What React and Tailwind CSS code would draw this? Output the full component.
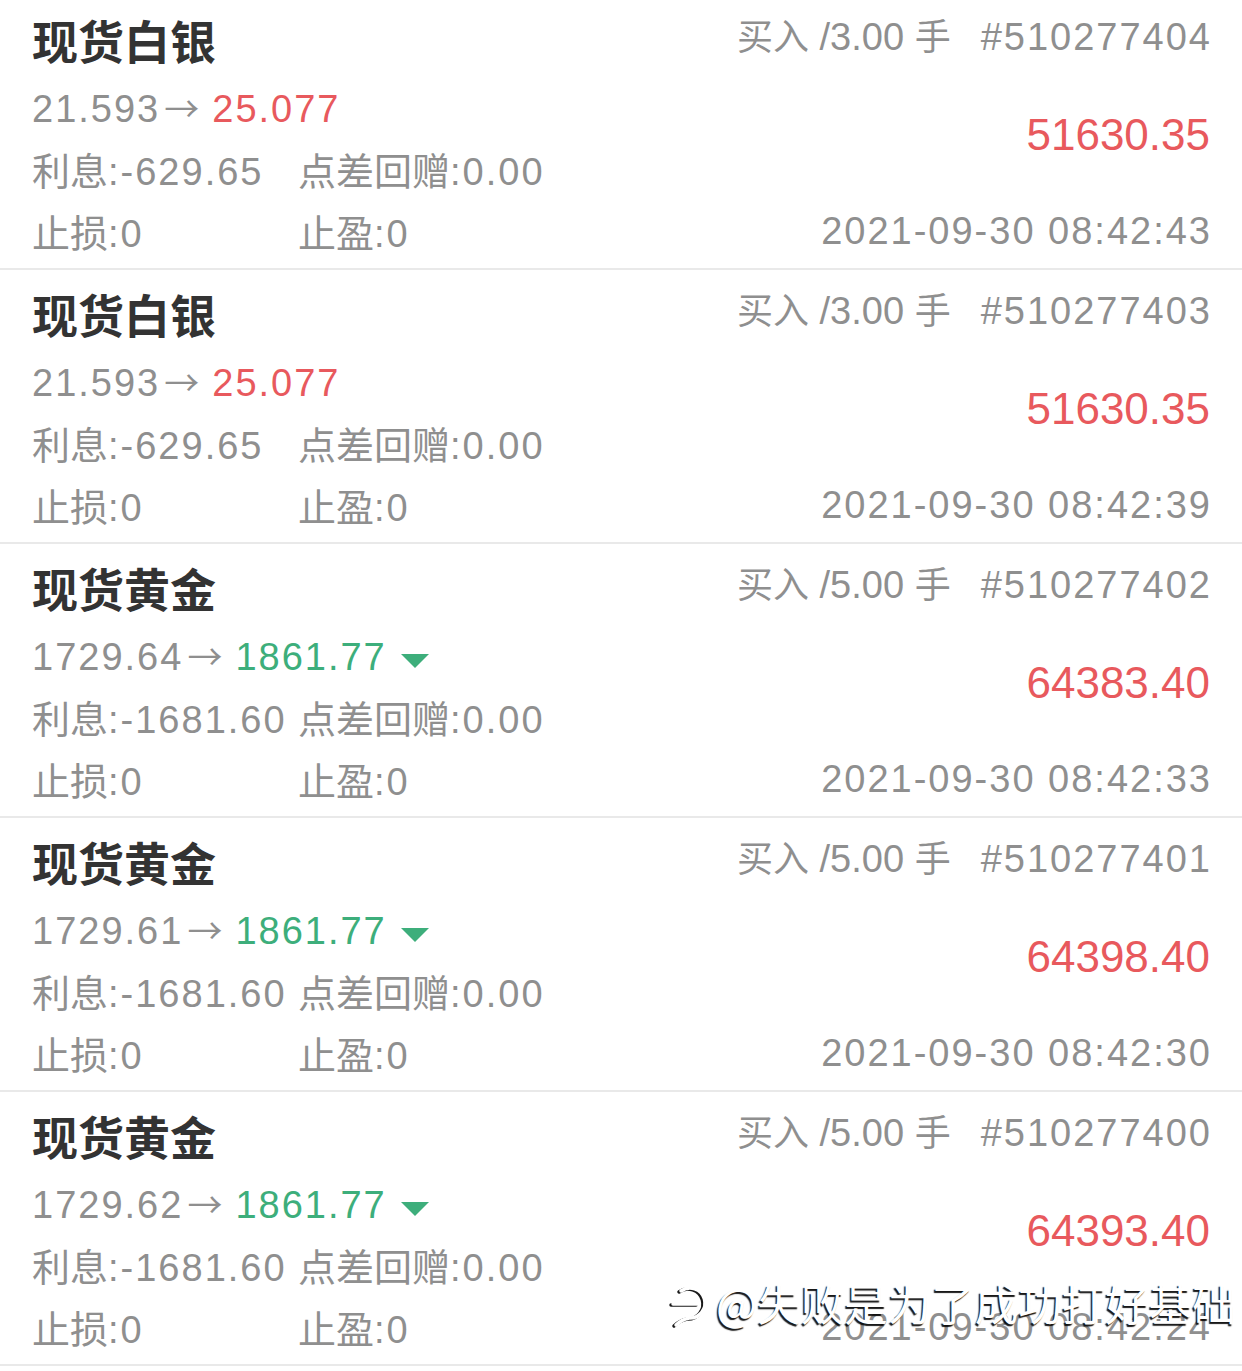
import React from "react";

const rows = [
  { name: "现货白银", lots: "3.00", id: "510277404", open: "21.593", cur: "25.077", up: true, interest: "-629.65", profit: "51630.35", time: "2021-09-30 08:42:43" },
  { name: "现货白银", lots: "3.00", id: "510277403", open: "21.593", cur: "25.077", up: true, interest: "-629.65", profit: "51630.35", time: "2021-09-30 08:42:39" },
  { name: "现货黄金", lots: "5.00", id: "510277402", open: "1729.64", cur: "1861.77", up: false, interest: "-1681.60", profit: "64383.40", time: "2021-09-30 08:42:33" },
  { name: "现货黄金", lots: "5.00", id: "510277401", open: "1729.61", cur: "1861.77", up: false, interest: "-1681.60", profit: "64398.40", time: "2021-09-30 08:42:30" },
  { name: "现货黄金", lots: "5.00", id: "510277400", open: "1729.62", cur: "1861.77", up: false, interest: "-1681.60", profit: "64393.40", time: "2021-09-30 08:42:24" },
];

const SPLIT = /([\u2E80-\u9FFF\uFF00-\uFFEF]+)/;
const IS_CJK = /^[\u2E80-\u9FFF\uFF00-\uFFEF]/;

const latG = "font-['Liberation_Sans',sans-serif] text-[38px] tracking-[2px]";
const cjkG = "font-['Noto_Sans_CJK_SC',sans-serif] text-[38px]";

function Mixed({ text }) {
  return text
    .split(SPLIT)
    .filter(Boolean)
    .map((p, i) =>
      IS_CJK.test(p) ? (
        <span key={i} className={cjkG}>{p}</span>
      ) : (
        <span key={i} className={latG}>{p}</span>
      )
    );
}

function Row({ r }) {
  return (
    <div className="h-[274px] border-b-2 border-[#e9e9e9] px-[32px] flex justify-between">
      <div className="flex flex-col">
        <div className="mt-[11px] h-[64px] leading-[64px] text-[46px] font-bold text-[#333333] font-['Noto_Sans_CJK_SC',sans-serif] whitespace-nowrap">
          {r.name}
        </div>
        <div className="mt-[5px] h-[62px] leading-[62px] whitespace-nowrap text-[#8f8f8f]">
          <span className={latG}>{r.open}</span>
          <span className="font-['Noto_Sans_CJK_SC',sans-serif] text-[35px] ml-[4px] mr-[13px]">→</span>
          <span className={latG + (r.up ? " text-[#e8595d]" : " text-[#3dae7b]")}>{r.cur}</span>
          {!r.up && (
            <svg width="28" height="14" viewBox="0 0 28 14" className="inline-block align-middle ml-[14px] mb-[9px]">
              <polygon points="0,0 28,0 14,14" fill="#3dae7b" />
            </svg>
          )}
        </div>
        <div className="h-[62px] leading-[62px] grid grid-cols-[266px_auto] whitespace-nowrap text-[#8f8f8f]">
          <div><Mixed text={"利息:" + r.interest} /></div>
          <div><Mixed text="点差回赠:0.00" /></div>
        </div>
        <div className="h-[62px] leading-[62px] grid grid-cols-[266px_auto] whitespace-nowrap text-[#8f8f8f]">
          <div><Mixed text="止损:0" /></div>
          <div><Mixed text="止盈:0" /></div>
        </div>
      </div>
      <div className="flex flex-col items-end">
        <div className="mt-[13px] h-[50px] leading-[50px] whitespace-nowrap text-[#8f8f8f] -mr-[2px]">
          <span className="font-['Noto_Sans_CJK_SC',sans-serif] text-[36px]">买入</span>
          <span className="font-['Liberation_Sans',sans-serif] text-[38px]"> /{r.lots} </span>
          <span className="font-['Noto_Sans_CJK_SC',sans-serif] text-[36px]">手</span>
          <span className={latG + " ml-[30px]"}>#{r.id}</span>
        </div>
        <div className="mt-[51px] h-[50px] leading-[50px] whitespace-nowrap text-[44px] text-[#e8595d] font-['Liberation_Sans',sans-serif]">
          {r.profit}
        </div>
        <div className="mt-[40px] h-[62px] leading-[62px] whitespace-nowrap text-[#8f8f8f] -mr-[2px]">
          <span className={latG}>{r.time}</span>
        </div>
      </div>
    </div>
  );
}

export default function App() {
  return (
    <div className="relative w-[1242px] h-[1371px] bg-white overflow-hidden">
      <div className="-mt-[4px]">
        {rows.map((r, i) => (
          <Row key={i} r={r} />
        ))}
      </div>
      <div className="absolute left-[668px] top-[1278px] flex items-center gap-[4px] text-white">
        <svg width="44" height="50" viewBox="0 0 44 50" className="[filter:drop-shadow(-1.5px_1.5px_0.5px_rgba(0,0,0,0.9))]">
          <path d="M13 13 A15 15 0 1 1 21 40 Q13 42 8 47" fill="none" stroke="white" strokeWidth="3.5" strokeLinecap="round" />
          <path d="M5 26 H30" fill="none" stroke="white" strokeWidth="3.5" strokeLinecap="round" />
        </svg>
        <span className="font-['Noto_Sans_CJK_SC',sans-serif] text-[43.5px] leading-[50px] [text-shadow:-1.5px_1.5px_1px_rgba(0,0,0,0.9)] whitespace-nowrap">
          @失败是为了成功打好基础
        </span>
      </div>
    </div>
  );
}
